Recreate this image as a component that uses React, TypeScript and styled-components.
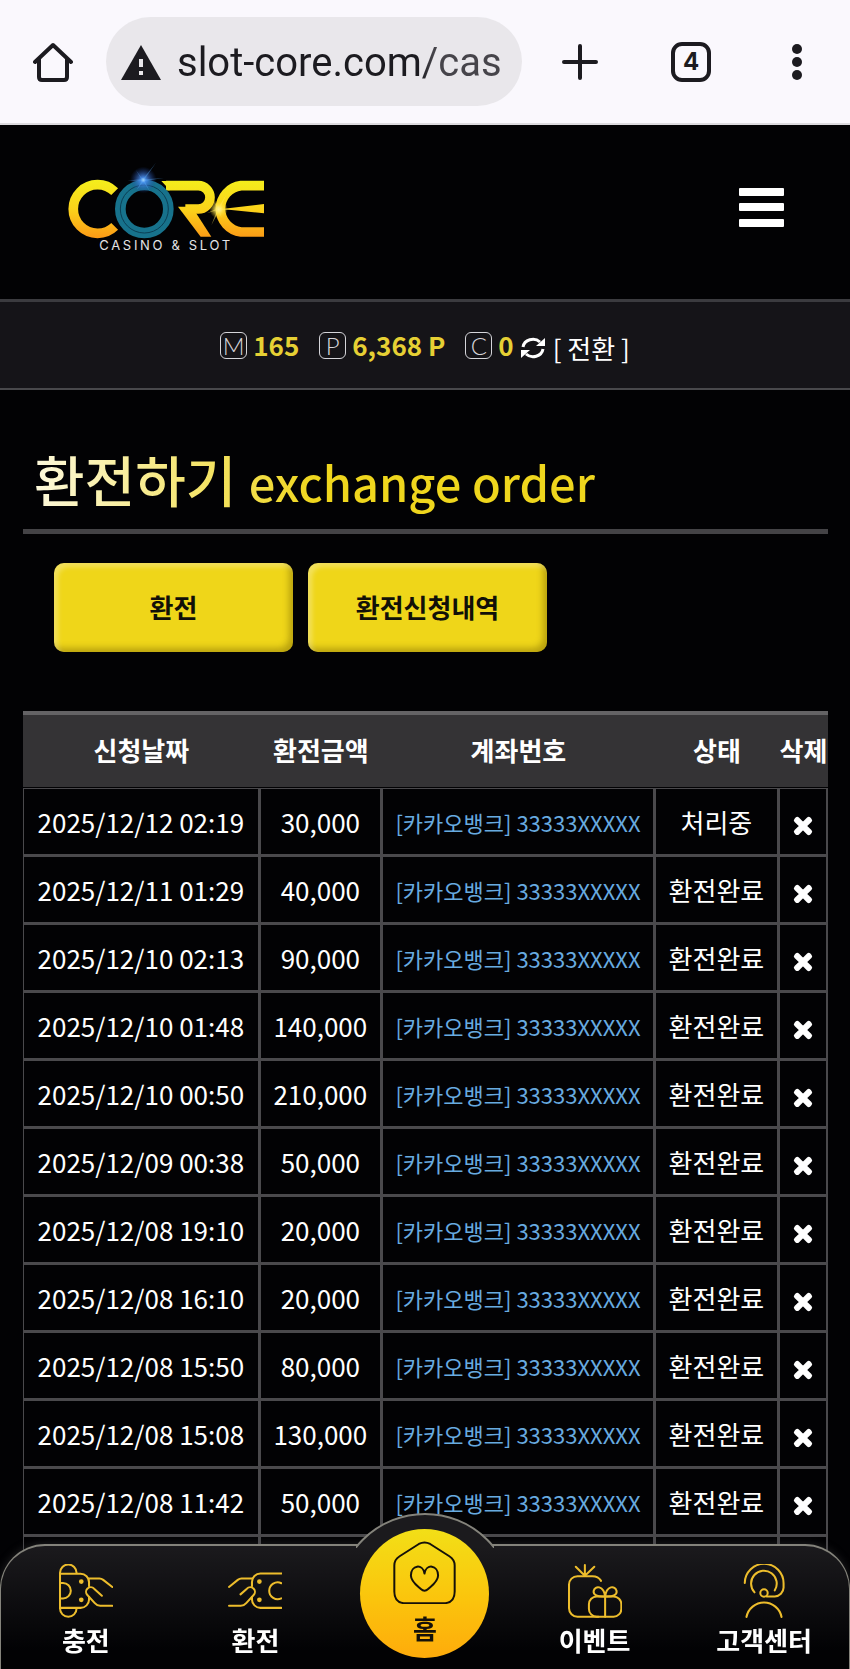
import React from "react";
import styled, { createGlobalStyle } from "styled-components";
import { FaTimes } from "react-icons/fa";

const GlobalStyle = createGlobalStyle`
  *, *::before, *::after { box-sizing: border-box; }
  body {
    margin: 0;
    background: #020204;
    color: #fff;
    font-family: "Noto Sans CJK KR", "Noto Sans", sans-serif;
    font-size: 26px;
  }
  button { font: inherit; color: inherit; border: 0; padding: 0; background: none; cursor: pointer; }
  a { color: inherit; text-decoration: none; }
  svg { display: block; flex: none; }
`;

const Page = styled.div`
  min-height: 100vh;
  background: #020204;
`;

/* Browser bar */

const BrowserBar = styled.div`
  display: grid;
  grid-template-columns: 106px minmax(0, 416fr) minmax(0, 116fr) minmax(0, 106fr) minmax(0, 106fr);
  align-items: center;
  height: 125px;
  background: #faf8fd;
  border-bottom: 2px solid #dddbdf;
  color: #1c1b20;
`;

const BarButton = styled.button`
  display: flex;
  align-items: center;
  justify-content: center;
  height: 89px;
`;

const TabCount = styled.span`
  display: flex;
  align-items: center;
  justify-content: center;
  width: 40px;
  height: 40px;
  border: 4px solid #1c1b20;
  border-radius: 11px;
  font: 700 24px/32px Inter, sans-serif;
`;

const AddressField = styled.label`
  display: flex;
  align-items: center;
  gap: 16px;
  height: 89px;
  padding: 2px 12px 0 15px;
  border-radius: 45px;
  background: #e9e7eb;
`;

const AddressInput = styled.input`
  flex: 1;
  min-width: 0;
  padding: 0;
  border: 0;
  outline: 0;
  font: 400 40px/52px Roboto, sans-serif;
  background: linear-gradient(90deg, #1c1b20 73%, #46444a 77%);
  background-clip: text;
  color: transparent;
`;

/* Site header */

const Header = styled.header`
  display: flex;
  align-items: flex-start;
  justify-content: space-between;
  height: 174px;
  padding: 35px 66px 0 65px;
`;

const MenuButton = styled.button`
  padding-top: 27px;
`;

const Balance = styled.section`
  display: flex;
  align-items: center;
  justify-content: center;
  height: 91px;
  border-top: 3px solid #3b3b3f;
  border-bottom: 2px solid #48484b;
  background: #151418;
`;

const BalanceItem = styled.span`
  display: flex;
  align-items: center;
  gap: 6px;
  margin-right: 20px;
  color: #e6d034;
  font-weight: 700;
  line-height: 40px;

  &:last-of-type { margin-right: 7px; }
`;

const Badge = styled.span`
  width: 27px;
  height: 27px;
  border: 1px solid #d5d5da;
  border-radius: 6px;
  color: #d5d5da;
  font: 300 24px/25px Lato, sans-serif;
  text-align: center;
`;

const SwitchButton = styled.button`
  display: flex;
  align-items: center;
  gap: 8px;
  padding-top: 6px;
  line-height: 36px;
`;

/* Content */

const Content = styled.main`
  padding: 52px 22px 0 23px;
`;

const Title = styled.h1`
  margin: 0;
  padding: 0 11px;
  height: 92px;
  border-bottom: 5px solid #444346;
  font-weight: 500;
  font-size: 55px;
  line-height: 72px;

  span {
    background: linear-gradient(90deg, #fdf9dc, #efd61d 50%);
    background-clip: text;
    color: transparent;
  }
  small { font-size: 47px; }
`;

const Actions = styled.div`
  display: flex;
  gap: 15px;
  padding: 29px 31px 59px;
`;

const ActionButton = styled.button`
  width: 239px;
  height: 89px;
  padding-bottom: 2px;
  border-radius: 10px;
  background: #efd619;
  box-shadow: inset 4px 4px 5px rgba(255, 255, 255, 0.3), inset -4px -4px 6px rgba(120, 100, 0, 0.45);
  color: #111008;
  font-weight: 700;
`;

const Table = styled.table`
  width: 100%;
  table-layout: fixed;
  border-collapse: separate;
  border-spacing: 0;
`;

const Col = styled.col<{ $share: number }>`
  width: ${(p) => p.$share}%;
`;

const HeadCell = styled.th`
  height: 77px;
  padding: 0 0 4px;
  border-top: 4px solid #646365;
  border-bottom: 1px solid #020204;
  background: #343335;
  font-weight: 700;
  white-space: nowrap;
`;

const Cell = styled.td`
  height: 68px;
  padding: 0;
  border: solid #4a494c;
  border-width: 1px 2px 2px 1px;
  text-align: center;
  white-space: nowrap;
  line-height: 40px;
`;

const Account = styled.a`
  color: #68abe0;
  font-size: 22px;
`;

const DeleteButton = styled.button`
  display: block;
  margin: 8px auto 0;

  svg { stroke: #fff; stroke-width: 36; overflow: visible; }
`;

/* Bottom navigation */

const BottomNav = styled.nav`
  position: fixed;
  left: 0;
  right: 0;
  bottom: 0;
  display: grid;
  grid-template-columns: repeat(5, 1fr);
  height: 125px;
  border: solid #84837b;
  border-width: 2px 1px 0;
  border-radius: 45px 45px 0 0;
  background: linear-gradient(#1b1a1d, #020204 85%);
  box-shadow: 0 0 10px rgba(90, 90, 90, 0.35);
`;

const Bump = styled.span`
  position: absolute;
  left: 50%;
  top: -33px;
  width: 138px;
  height: 35px;
  margin-left: -69px;
  overflow: hidden;

  &::before {
    content: "";
    position: absolute;
    left: -20px;
    top: 0;
    width: 178px;
    height: 178px;
    border: 2px solid #84837b;
    border-radius: 50%;
    background: #1b1a1d;
  }
`;

const NavLink = styled.a`
  display: flex;
  flex-direction: column;
  align-items: center;
  gap: 4px;
  padding-top: 18px;
  font-weight: 700;
  line-height: 36px;
  white-space: nowrap;
`;

const HomeLink = styled.a`
  position: relative;
  display: flex;
  flex-direction: column;
  align-items: center;
  justify-self: center;
  gap: 6px;
  width: 129px;
  height: 129px;
  margin-top: -17px;
  padding-top: 12px;
  border-radius: 50%;
  background: linear-gradient(#f2df17, #fbc40c 55%, #feab0b);
  color: #15110a;
  font-weight: 700;
  line-height: 36px;
`;

const Logo = () => (
  <svg width="200" height="95" viewBox="75 30 600 285" role="img" aria-label="CORE">
    <defs>
      <linearGradient id="gold" gradientUnits="userSpaceOnUse" x1="0" y1="90" x2="0" y2="264">
        <stop offset="0" stopColor="#f4ee1c" />
        <stop offset="0.5" stopColor="#fbd31a" />
        <stop offset="1" stopColor="#fb9a16" />
      </linearGradient>
      <radialGradient id="blueGlow">
        <stop offset="0" stopColor="#d5f2ff" />
        <stop offset="0.2" stopColor="#4a8ff0" stopOpacity="0.9" />
        <stop offset="1" stopColor="#1c3f9a" stopOpacity="0" />
      </radialGradient>
      <radialGradient id="goldGlow">
        <stop offset="0" stopColor="#fffbd0" />
        <stop offset="0.4" stopColor="#ffe95a" stopOpacity="0.8" />
        <stop offset="1" stopColor="#ffd21a" stopOpacity="0" />
      </radialGradient>
    </defs>
    <g fill="none" stroke="url(#gold)" strokeWidth="29">
      <path d="M224 125A73 73 0 1 0 224 229" />
      <path d="M378 107H475A35 35 0 0 1 475 177H436" />
      <path d="M672 107H603A70 70 0 0 0 603 246H672" />
    </g>
    <path d="M364 93H384V121H390Z" fill="url(#gold)" />
    <path d="M414 170H456L514 260H482Z" fill="url(#gold)" />
    <path d="M545 177L672 162V190Z" fill="url(#gold)" />
    <circle cx="313" cy="177" r="72" fill="none" stroke="#17728c" strokeWidth="32" />
    <circle cx="313" cy="177" r="72" fill="none" stroke="#0b3f55" strokeWidth="3" />
    <circle cx="310" cy="90" r="40" fill="url(#blueGlow)" />
    <path d="M308 88L348 38L314 88L372 84L314 93L330 125L310 95L290 120L305 92L262 92L304 87L286 58Z" fill="#58aaf5" opacity="0.4" />
    <circle cx="536" cy="178" r="28" fill="url(#goldGlow)" />
    <path d="M534 174L560 132L540 176L580 178L540 181L545 205L536 184L514 226L531 181L500 190L530 176L520 150Z" fill="#ffe75a" opacity="0.5" />
    <text x="178" y="300" fill="#e4e4e6" fontFamily="Inter, sans-serif" fontSize="39" letterSpacing="8">
      CASINO &amp; SLOT
    </text>
  </svg>
);

const RefreshIcon = () => (
  <svg width="24" height="24" viewBox="0 0 24 24" fill="none" stroke="#fff" strokeWidth="3">
    <path d="M2 11A10 9 0 0 1 19 6M22 13A10 9 0 0 1 5 18" />
    <path d="M24 2V10H15ZM0 22V14H9Z" fill="#fff" stroke="none" />
  </svg>
);

const iconStroke = {
  fill: "none",
  stroke: "#edbd2c",
  strokeWidth: 6,
  strokeLinecap: "round" as const,
  strokeLinejoin: "round" as const,
};

const DepositIcon = () => (
  <svg width="54" height="54" viewBox="0 0 160 160" {...iconStroke}>
    <path d="M3 132V26A24 24 0 0 1 52 26M3 132A24 24 0 0 0 52 132" />
    <path d="M3 29H64A25 25 0 0 1 89 54V66M89 98V105A25 25 0 0 1 64 130H3M3 56H12A23 23 0 0 1 12 102H3" />
    <path d="M88 43H120Q126 43 131 47L158 68M127 94L104 73A13 13 0 0 0 84 92L106 116Q113 124 122 124H158" />
    <circle cx="66" cy="52" r="4" fill="#edbd2c" />
    <circle cx="66" cy="106" r="4" fill="#edbd2c" />
  </svg>
);

const WithdrawIcon = () => (
  <svg width="54" height="54" viewBox="0 0 160 160" {...iconStroke}>
    <path d="M158 28H96A25 25 0 0 0 71 53V66M71 98V105A25 25 0 0 0 96 130H158M158 57A25 25 0 1 0 158 102" />
    <path d="M72 43H40Q34 43 29 47L3 68M37 90L56 73A13 13 0 0 1 76 92L54 116Q47 124 38 124H3" />
    <circle cx="93" cy="52" r="4" fill="#edbd2c" />
    <circle cx="93" cy="106" r="4" fill="#edbd2c" />
  </svg>
);

const EventIcon = () => (
  <svg width="54" height="54" viewBox="0 0 160 160" {...iconStroke}>
    <path d="M50 35V3M50 35L23 8M50 35L78 8" />
    <path d="M98 50Q90 36 72 36H28A25 25 0 0 0 3 61V131A25 25 0 0 0 28 156H90" />
    <rect x="62" y="96" width="96" height="60" rx="23" />
    <path d="M110 156V96C88 98 74 92 76 80C80 62 106 64 110 96C114 64 140 62 144 80C146 92 132 98 110 96" />
  </svg>
);

const SupportIcon = () => (
  <svg width="54" height="54" viewBox="-20 0 160 160" {...iconStroke}>
    <path d="M3 56A57 57 0 0 1 118 58V70A27 27 0 0 1 92 96H68M32 84A38 38 0 1 1 92 78" />
    <circle cx="60" cy="86" r="11" />
    <path d="M8 157A53 53 0 0 1 112 157" />
  </svg>
);

const HomeBadgeIcon = () => (
  <svg width="63" height="63" viewBox="0 0 190 190" fill="none" stroke="#15110a" strokeWidth="6" strokeLinejoin="round">
    <path d="M78 9Q95 0 112 9L170 46Q186 56 186 74V152Q186 188 150 188H40Q4 188 4 152V74Q4 56 20 46Z" />
    <path d="M95 98C90 67 54 72 54 104C54 122 72 134 84 145Q95 155 106 145C118 134 136 122 136 104C136 72 100 67 95 98Z" />
  </svg>
);

const shares = [29.4, 15.2, 33.9, 15.4, 6.1];
const headings = ["신청날짜", "환전금액", "계좌번호", "상태", "삭제"];

const orders = [
  ["2025/12/12 02:19", "30,000", "처리중"],
  ["2025/12/11 01:29", "40,000", "환전완료"],
  ["2025/12/10 02:13", "90,000", "환전완료"],
  ["2025/12/10 01:48", "140,000", "환전완료"],
  ["2025/12/10 00:50", "210,000", "환전완료"],
  ["2025/12/09 00:38", "50,000", "환전완료"],
  ["2025/12/08 19:10", "20,000", "환전완료"],
  ["2025/12/08 16:10", "20,000", "환전완료"],
  ["2025/12/08 15:50", "80,000", "환전완료"],
  ["2025/12/08 15:08", "130,000", "환전완료"],
  ["2025/12/08 11:42", "50,000", "환전완료"],
];

export default function App() {
  return (
    <Page>
      <GlobalStyle />
      <BrowserBar>
        <BarButton aria-label="Home">
          <svg width="40" height="40" viewBox="0 0 40 40" fill="none" stroke="#1c1b20" strokeWidth="4" strokeLinecap="round" strokeLinejoin="round">
            <path d="M2 20L20 3L38 20M6 17V35Q6 38 9 38H31Q34 38 34 35V17" />
          </svg>
        </BarButton>
        <AddressField>
          <svg width="40" height="35" viewBox="0 0 40 35" role="img" aria-label="Not secure">
            <path d="M20 0L40 35H0Z" fill="#1c1b20" />
            <path d="M18 14H22V22H18ZM18 26H22V30H18Z" fill="#e9e7eb" />
          </svg>
          <AddressInput aria-label="Address" defaultValue="slot-core.com/cas" />
        </AddressField>
        <BarButton aria-label="New tab">
          <svg width="36" height="36" viewBox="0 0 36 36" stroke="#1c1b20" strokeWidth="4" strokeLinecap="round">
            <path d="M18 2V34M2 18H34" />
          </svg>
        </BarButton>
        <BarButton aria-label="Tabs">
          <TabCount>4</TabCount>
        </BarButton>
        <BarButton aria-label="More">
          <svg width="10" height="36" viewBox="0 0 10 36" fill="#1c1b20">
            <circle cx="5" cy="5" r="5" />
            <circle cx="5" cy="18" r="5" />
            <circle cx="5" cy="31" r="5" />
          </svg>
        </BarButton>
      </BrowserBar>

      <Header>
        <a href="#main"><Logo /></a>
        <MenuButton aria-label="Menu">
          <svg width="45" height="40" viewBox="0 0 45 40" fill="#fff">
            <rect y="1" width="45" height="8" rx="1" />
            <rect y="16" width="45" height="8" rx="1" />
            <rect y="32" width="45" height="8" rx="1" />
          </svg>
        </MenuButton>
      </Header>

      <Balance>
        <BalanceItem><Badge>M</Badge>165</BalanceItem>
        <BalanceItem><Badge>P</Badge>6,368 P</BalanceItem>
        <BalanceItem><Badge>C</Badge>0</BalanceItem>
        <SwitchButton><RefreshIcon />[ 전환 ]</SwitchButton>
      </Balance>

      <Content id="main">
        <Title><span>환전하기 <small>exchange order</small></span></Title>
        <Actions>
          <ActionButton>환전</ActionButton>
          <ActionButton>환전신청내역</ActionButton>
        </Actions>
        <Table>
          <colgroup>
            {shares.map((s, i) => <Col key={i} $share={s} />)}
          </colgroup>
          <thead>
            <tr>{headings.map((h) => <HeadCell key={h} scope="col">{h}</HeadCell>)}</tr>
          </thead>
          <tbody>
            {orders.map(([date, amount, status]) => (
              <tr key={date}>
                <Cell>{date}</Cell>
                <Cell>{amount}</Cell>
                <Cell><Account href="#account">[카카오뱅크] 33333XXXXX</Account></Cell>
                <Cell>{status}</Cell>
                <Cell>
                  <DeleteButton aria-label="삭제"><FaTimes size={24} /></DeleteButton>
                </Cell>
              </tr>
            ))}
            <tr>{headings.map((h) => <Cell key={h} />)}</tr>
          </tbody>
        </Table>
      </Content>

      <BottomNav>
        <Bump />
        <NavLink href="#deposit"><DepositIcon />충전</NavLink>
        <NavLink href="#withdraw"><WithdrawIcon />환전</NavLink>
        <HomeLink href="#home"><HomeBadgeIcon />홈</HomeLink>
        <NavLink href="#event"><EventIcon />이벤트</NavLink>
        <NavLink href="#support"><SupportIcon />고객센터</NavLink>
      </BottomNav>
    </Page>
  );
}
